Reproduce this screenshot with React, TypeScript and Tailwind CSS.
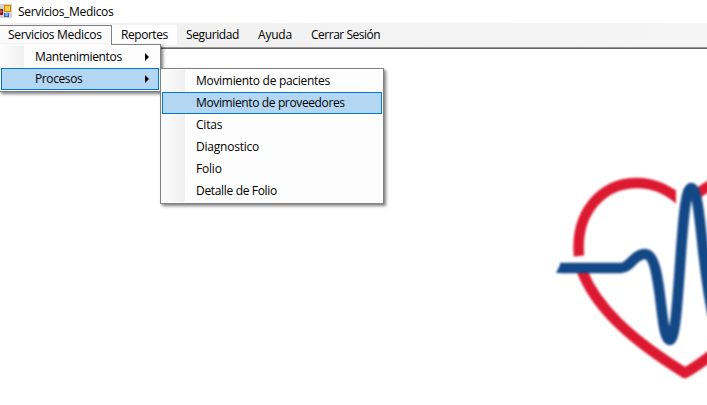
import React from "react";

const menus = [
  { label: "Seguridad", cls: "w-[72px] tracking-[-0.38px]" },
  { label: "Ayuda", cls: "w-[53px] tracking-[-0.2px]" },
  { label: "Cerrar Sesión", cls: "w-[90px] tracking-[-0.48px]" },
];

const processes = [
  { label: "Movimiento de pacientes", cls: "tracking-[-0.3px]" },
  { label: "Movimiento de proveedores", cls: "tracking-[-0.37px]", active: true },
  { label: "Citas", cls: "tracking-[-0.2px]" },
  { label: "Diagnostico", cls: "tracking-[-0.22px]" },
  { label: "Folio", cls: "tracking-[-0.2px]" },
  { label: "Detalle de Folio", cls: "tracking-[-0.33px]" },
];

function AppIcon() {
  return (
    <svg className="block h-4 w-3 shrink-0" viewBox="0 0 12 16" shapeRendering="crispEdges">
      <rect x="0" y="0" width="12" height="14" fill="#d4d4d4" />
      <rect x="0" y="5" width="3" height="6" fill="#8d1717" />
      <rect x="0" y="6" width="2" height="3" fill="#d04a4a" />
      <rect x="4" y="1" width="7" height="7" fill="#c98a00" />
      <rect x="5" y="2" width="5" height="5" fill="#ffcf45" />
      <rect x="4" y="9" width="5" height="4" fill="#2f63c4" />
      <rect x="5" y="9" width="3" height="3" fill="#6fa3ff" />
    </svg>
  );
}

function Arrow() {
  return (
    <svg className="block h-[8px] w-[4px]" viewBox="0 0 4 8">
      <path d="M0 0L4 4L0 8Z" fill="#000" />
    </svg>
  );
}

function HeartLogo() {
  return (
    <svg className="-mr-[10px] block h-[356px] w-[177px] shrink-0 blur-[0.8px]" viewBox="540 49 177 356" fill="none">
      <g stroke="#dc1931" strokeWidth="10.5">
        <path d="M579 256C575 212 602 183 637 183C654 183 667 189 681 201" />
        <path d="M676 180H690V215H676Z" fill="#fff" stroke="none" />
        <path d="M697 194C702 190 708 186 718 182" />
        <path d="M582 271C596 307 630 339 685 373C694 368 703 362 718 350" strokeLinejoin="round" />
      </g>
      <path
        d="M560 268H621C630 268 634 254 645 254C663 254 659 340 670 340C680 340 680 188 691 188C701 188 701 265 713 315"
        stroke="#134887"
        strokeWidth="10.5"
        strokeLinejoin="round"
      />
      <path d="M556 273L561 263H564V273Z" fill="#134887" />
    </svg>
  );
}

export default function App() {
  return (
    <div className="relative h-[405px] w-[707px] overflow-hidden bg-white font-['Open_Sans',sans-serif] text-[12px] leading-[16px] whitespace-nowrap text-black">
      <header className="flex h-[23px] items-start pt-[4px]">
        <AppIcon />
        <span className="ml-[6px] tracking-[-0.32px]">Servicios_Medicos</span>
      </header>
      <nav className="flex h-[26px] border-b border-[#666] bg-linear-to-r from-[#f0f0f0] to-[#f5f5f5]">
        <div className="flex w-full border-b border-[#999] pt-[2px]">
          <div className="h-[20px] w-[112px] border-t border-r border-[#808080] bg-[#fafafa] pt-px pl-[8px] tracking-[-0.3px]">
            Servicios Medicos
          </div>
          <div className="mr-[9px] h-[20px] w-[65px] bg-[#fdfdfd] pt-[2px] pl-[9px] tracking-[-0.45px]">Reportes</div>
          {menus.map((m) => (
            <div key={m.label} className={`pt-[2px] ${m.cls}`}>{m.label}</div>
          ))}
        </div>
      </nav>
      <main className="flex justify-end">
        <HeartLogo />
      </main>

      <div className="absolute top-[44px] left-[-1px] w-[162px] border border-[#808080] bg-[#fdfdfd] pt-px pb-px shadow-[2px_2px_3px_rgba(0,0,0,0.5)]">
        <div className="absolute -top-px left-0 h-px w-[111px] bg-[#fafafa]" />
        <div className="flex h-[22px] items-center bg-linear-to-r from-[#fcfcfc] from-0% via-[#f0f0f0] via-[24px] to-[#fdfdfd] to-[24px] pr-[11px] pl-[35px]">
          <span className="flex-1 tracking-[-0.35px]">Mantenimientos</span>
          <Arrow />
        </div>
        <div className="mr-px ml-px flex h-[22px] items-center border border-[#0078d7] bg-[#b3d7f3] pr-[9px] pl-[33px]">
          <span className="flex-1 tracking-[-0.4px]">Procesos</span>
          <Arrow />
        </div>
      </div>

      <div className="absolute top-[68px] left-[160px] w-[224px] border border-[#808080] bg-[#fdfdfd] p-px shadow-[2px_2px_3px_rgba(0,0,0,0.5)]">
        <div className="bg-linear-to-r from-[#fcfcfc] from-0% via-[#f0f0f0] via-[23px] to-[#fdfdfd] to-[23px]">
          {processes.map((p) => (
            <div
              key={p.label}
              className={`flex h-[22px] items-center border pl-[33px] ${p.cls} ${p.active ? "border-[#0078d7] bg-[#b3d7f3]" : "border-transparent"}`}
            >
              {p.label}
            </div>
          ))}
        </div>
      </div>
    </div>
  );
}
